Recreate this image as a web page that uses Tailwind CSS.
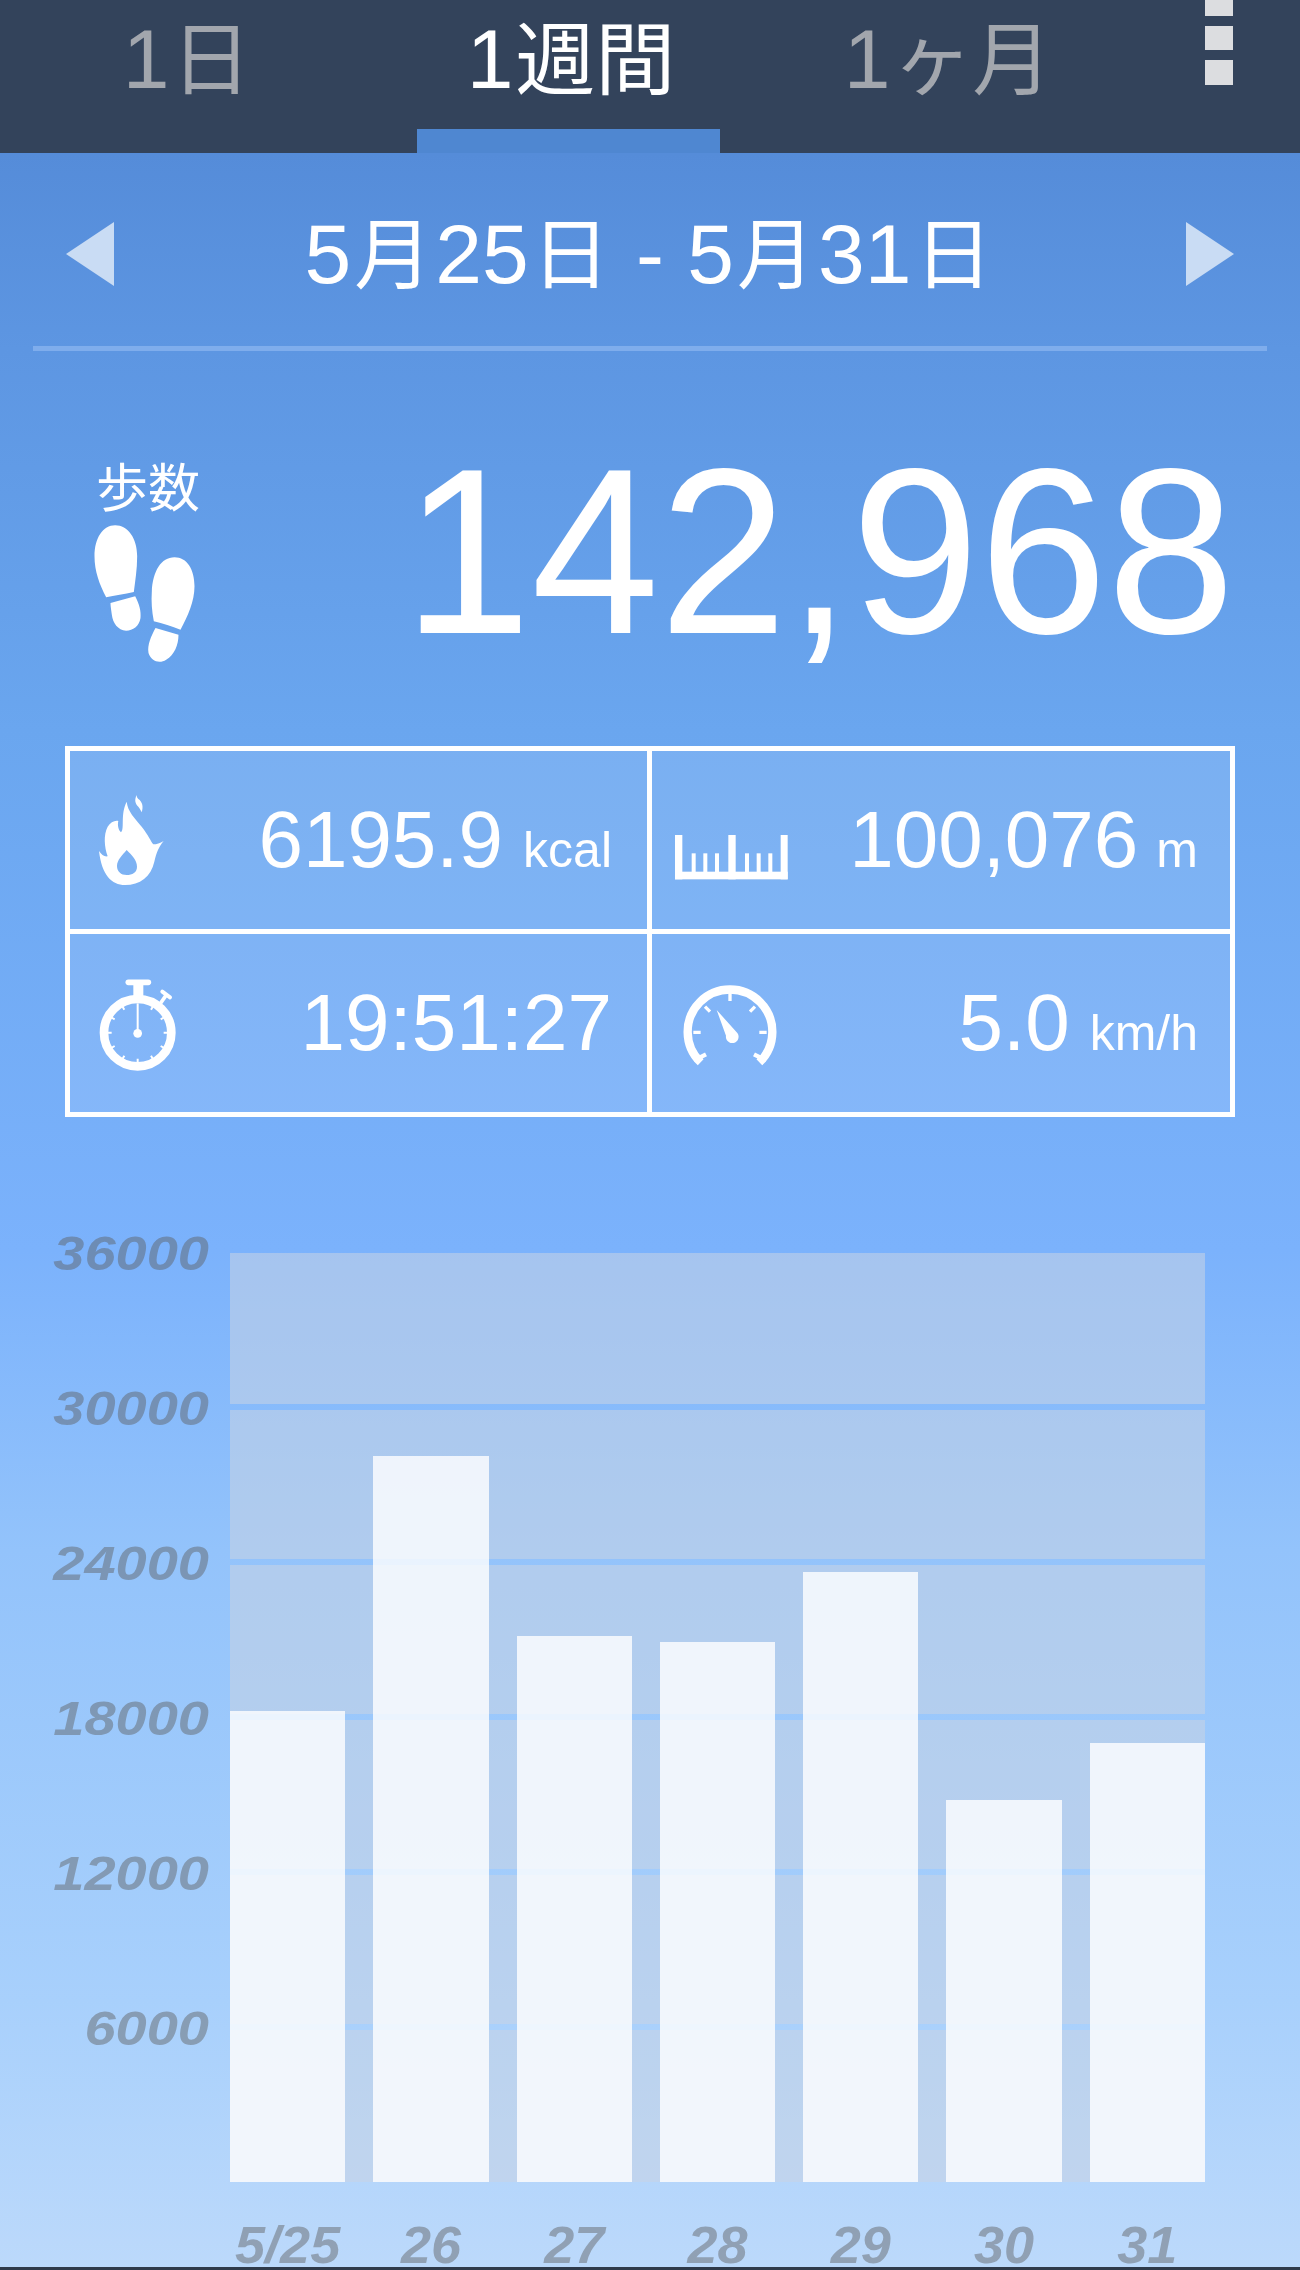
<!DOCTYPE html>
<html lang="ja">
<head>
    <meta charset="UTF-8">
    <title>歩数</title>
    <script src="https://cdn.jsdelivr.net/npm/@tailwindcss/browser@4"></script>
</head>
<body class="font-['Liberation_Sans','Noto_Sans_CJK_JP',sans-serif]">
    <div class="w-[1300px] h-[2270px] overflow-hidden flex flex-col text-white bg-[linear-gradient(180deg,#558cd9_0px,#558cd9_153px,#5d96e2_350px,#6aa6ef_730px,#7bb2fc_1250px,#93c3fb_1550px,#a8d0fc_2000px,#bcd9fb_2270px)]">

        <!-- tabs -->
        <header class="relative h-[153px] shrink-0 bg-[#33435b] flex items-start">
            <div class="w-[376px] h-[118px] flex items-center justify-center text-[84px] leading-none text-[#a2a6ad]"><p>1<span class="text-[80px] mx-[2px]">日</span></p></div>
            <div class="w-[392px] h-[118px] flex items-center justify-center text-[84px] leading-none"><p>1<span class="text-[80px] mx-[2px]">週間</span></p></div>
            <div class="w-[362px] h-[118px] flex items-center justify-center text-[84px] leading-none text-[#a2a6ad]"><p>1<span class="text-[80px] mx-[2px]">ヶ月</span></p></div>
            <div class="ml-[75px] w-[28px] flex flex-col gap-[10px]">
                <div class="h-[16px] bg-[#dcdde0]"></div>
                <div class="h-[24px] bg-[#dcdde0]"></div>
                <div class="h-[25px] bg-[#dcdde0]"></div>
            </div>
            <div class="absolute left-[417px] bottom-0 w-[303px] h-[24px] bg-[#4f87d1]"></div>
        </header>

        <!-- date range -->
        <div class="h-[193px] shrink-0 pt-[9px] px-[66px] flex items-center justify-between">
            <svg width="48" height="64" viewBox="0 0 48 64"><polygon points="48,0 48,64 0,32" fill="#c9dcf4"/></svg>
            <div class="text-[84px] leading-none whitespace-pre">5<span class="text-[78px] mx-[3px]">月</span>25<span class="text-[78px] mx-[3px]">日</span> - 5<span class="text-[78px] mx-[3px]">月</span>31<span class="text-[78px] mx-[3px]">日</span></div>
            <svg width="48" height="64" viewBox="0 0 48 64"><polygon points="0,0 0,64 48,32" fill="#c9dcf4"/></svg>
        </div>
        <div class="mx-[33px] h-[5px] shrink-0 bg-[#7fadec]"></div>

        <!-- steps -->
        <div class="h-[395px] shrink-0 pl-[93px] pr-[65px] flex justify-between">
            <div class="w-[107px] pt-[104px]">
                <div class="text-[52px] leading-[68px] text-center w-[110px]">歩数</div>
                <svg class="mt-[1px] -ml-[2px]" width="107" height="140" viewBox="98 248 304 420" fill="#fff">
                    <path d="M135 468C115 430 100 390 100 345C100 290 125 252 162 252C200 252 228 290 228 345C228 385 222 420 218 452C190 458 160 462 135 468Z"/>
                    <path d="M148 485L222 465C235 490 240 510 238 530C234 555 215 568 195 568C170 566 155 545 152 520C150 505 148 495 148 485Z"/>
                    <path d="M278 540C272 510 270 480 272 450C275 390 300 348 340 348C378 348 400 385 400 435C400 480 380 525 358 565C332 555 305 547 278 540Z"/>
                    <path d="M283 560L352 580C352 610 340 640 315 655C295 668 270 660 262 635C258 610 270 585 283 560Z"/>
                </svg>
            </div>
            <div class="pt-[82px]"><div class="text-[236px] leading-none origin-right scale-x-[.975]">142,968</div></div>
        </div>

        <!-- stats -->
        <div class="ml-[65px] w-[1170px] h-[371px] shrink-0 border-[5px] border-white grid grid-cols-[582px_578px] grid-rows-[183px_178px]">
            <div class="border-r-[5px] border-b-[5px] border-white bg-white/10 pl-[15px] pr-[35px] flex items-center justify-between">
                <svg width="100" height="110" viewBox="0 0 300 330" fill="#fff">
                    <path fill-rule="evenodd" d="M120 300C80 300 50 270 42 198C50 210 58 216 68 214C58 185 55 150 68 125C76 112 90 105 100 108C97 120 100 135 108 142C120 130 105 90 125 50C128 80 150 100 170 125C190 150 198 170 205 178C215 178 225 175 236 168C222 185 215 200 208 230C198 275 165 300 120 300ZM125 195C112 210 96 225 96 243C96 260 108 270 125 270C142 270 156 262 156 245C156 225 140 210 125 195Z"/>
                    <path d="M155 30C148 45 150 55 160 65C166 72 168 78 170 82C176 65 172 50 160 42C156 38 155 34 155 30Z"/>
                </svg>
                <div class="flex items-baseline leading-none"><span class="text-[80px]">6195.9</span><span class="ml-[20px] text-[50px]">kcal</span></div>
            </div>
            <div class="border-b-[5px] border-white bg-white/10 pl-[13px] pr-[32px] flex items-center justify-between">
                <svg class="mt-[35px]" width="130" height="65" viewBox="0 0 390 195" fill="#fff">
                    <rect x="30" y="30" width="22" height="133"/>
                    <rect x="190" y="30" width="22" height="133"/>
                    <rect x="347" y="30" width="21" height="133"/>
                    <rect x="30" y="140" width="338" height="23"/>
                    <rect x="80" y="85" width="12" height="60"/>
                    <rect x="115" y="85" width="12" height="60"/>
                    <rect x="150" y="85" width="12" height="60"/>
                    <rect x="240" y="85" width="12" height="60"/>
                    <rect x="275" y="85" width="12" height="60"/>
                    <rect x="310" y="85" width="12" height="60"/>
                </svg>
                <div class="flex items-baseline leading-none"><span class="text-[80px]">100,076</span><span class="ml-[18px] text-[50px]">m</span></div>
            </div>
            <div class="border-r-[5px] border-white bg-white/10 pl-[15px] pr-[35px] flex items-center justify-between">
                <svg class="mt-[4px]" width="105" height="110" viewBox="0 0 315 330" fill="none" stroke="#fff">
                    <circle cx="158" cy="188" r="101" stroke-width="26"/>
                    <path d="M130 37H190" stroke-width="17" stroke-linecap="round"/>
                    <path d="M160 45V82" stroke-width="30"/>
                    <path d="M225 102L243 76" stroke-width="11"/>
                    <path d="M232 65L255 82" stroke-width="12" stroke-linecap="round"/>
                    <path d="M158 100V190" stroke-width="6"/>
                    <circle cx="158" cy="190" r="13" fill="#fff" stroke="none"/>
                    <path d="M198 119L205 107M227 148L239 141M236 188H250M227 228L239 235M198 257L205 269M158 266V280M118 257L111 269M89 228L77 235M80 188H66M89 148L77 141M118 119L111 107" stroke-width="6"/>
                </svg>
                <div class="flex items-baseline leading-none"><span class="text-[80px]">19:51:27</span></div>
            </div>
            <div class="bg-white/10 pl-[18px] pr-[32px] flex items-center justify-between">
                <svg class="mt-[4px]" width="120" height="100" viewBox="0 0 360 300" fill="none" stroke="#fff">
                    <path d="M92 262A127 127 0 1 1 268 262" stroke-width="25"/>
                    <path d="M72 256L108 238M288 256L252 238" stroke-width="13"/>
                    <path d="M180 50V78M105 95L120 110M255 95L240 110M70 172H92M290 172H268" stroke-width="10"/>
                    <path d="M140 105L168 182A19 19 0 1 0 202 174Z" fill="#fff" stroke="none"/>
                </svg>
                <div class="flex items-baseline leading-none"><span class="text-[80px]">5.0</span><span class="ml-[20px] text-[50px]">km/h</span></div>
            </div>
        </div>

        <!-- chart -->
        <div class="mt-[58px] flex items-start shrink-0">
            <div class="w-[230px] pr-[21px] text-right italic font-bold text-[56px] text-[#5e5e5e]/45">
                <div class="h-[155px] flex items-center justify-end"><span class="scale-y-[.875]">36000</span></div>
                <div class="h-[155px] flex items-center justify-end"><span class="scale-y-[.875]">30000</span></div>
                <div class="h-[155px] flex items-center justify-end"><span class="scale-y-[.875]">24000</span></div>
                <div class="h-[155px] flex items-center justify-end"><span class="scale-y-[.875]">18000</span></div>
                <div class="h-[155px] flex items-center justify-end"><span class="scale-y-[.875]">12000</span></div>
                <div class="h-[155px] flex items-center justify-end"><span class="scale-y-[.875]">6000</span></div>
            </div>
            <div class="w-[975px] mt-[78px]">
                <div class="relative h-[929px]">
                    <div class="h-full grid grid-rows-[151px_149px_149px_149px_149px_152px] gap-y-[6px]">
                        <div class="bg-[#c8d4e4]/55"></div>
                        <div class="bg-[#c8d4e4]/55"></div>
                        <div class="bg-[#c8d4e4]/55"></div>
                        <div class="bg-[#c8d4e4]/55"></div>
                        <div class="bg-[#c8d4e4]/55"></div>
                        <div class="bg-[#c8d4e4]/55"></div>
                    </div>
                    <div class="absolute inset-0 grid grid-cols-7 gap-x-[28px] items-end">
                        <div class="h-[471px] bg-white/80"></div>
                        <div class="h-[726px] bg-white/80"></div>
                        <div class="h-[546px] bg-white/80"></div>
                        <div class="h-[540px] bg-white/80"></div>
                        <div class="h-[610px] bg-white/80"></div>
                        <div class="h-[382px] bg-white/80"></div>
                        <div class="h-[439px] bg-white/80"></div>
                    </div>
                </div>
                <div class="mt-[41px] grid grid-cols-7 gap-x-[28px] text-center italic font-bold text-[54px] leading-[44px] text-[#5e5e5e]/45">
                    <div class="scale-y-[.95] whitespace-nowrap">5/25</div>
                    <div class="scale-y-[.95]">26</div>
                    <div class="scale-y-[.95]">27</div>
                    <div class="scale-y-[.95]">28</div>
                    <div class="scale-y-[.95]">29</div>
                    <div class="scale-y-[.95]">30</div>
                    <div class="scale-y-[.95]">31</div>
                </div>
            </div>
        </div>

        <div class="mt-auto h-[3px] shrink-0 bg-[#2f3a4a]"></div>
    </div>
</body>
</html>
